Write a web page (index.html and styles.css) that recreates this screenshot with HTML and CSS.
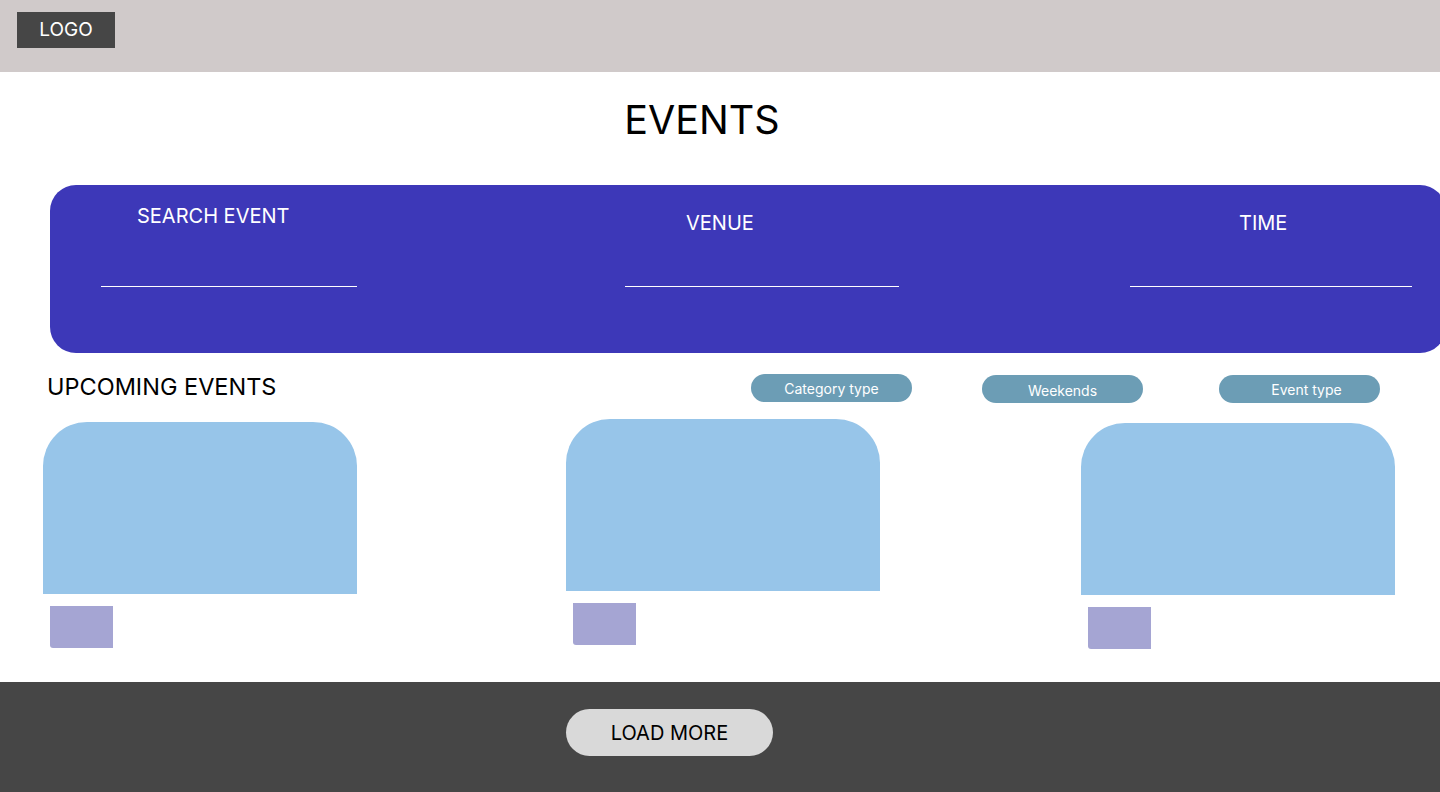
FILE: index.html
```html
<!DOCTYPE html>
<html lang="en">
<head>
    <meta charset="UTF-8">
    <meta name="viewport" content="width=device-width, initial-scale=1.0">
    <title>Events</title>
    <link rel="stylesheet" href="styles.css">
</head>
<body>
    <!-- top bar -->
    <header class="topbar">
        <div class="logo">LOGO</div>
    </header>

    <h1 class="page-title">EVENTS</h1>

    <!-- search panel -->
    <section class="search">
        <div class="field field--search">
            <span class="field__label">SEARCH EVENT</span>
            <span class="field__line"></span>
        </div>
        <div class="field field--venue">
            <span class="field__label">VENUE</span>
            <span class="field__line"></span>
        </div>
        <div class="field field--time">
            <span class="field__label">TIME</span>
            <span class="field__line"></span>
        </div>
    </section>

    <div class="upcoming">
        <h2 class="upcoming__title">UPCOMING EVENTS</h2>
        <div class="filters">
            <button class="pill pill--category">Category type</button>
            <button class="pill pill--weekends">Weekends</button>
            <button class="pill pill--type">Event type</button>
        </div>
    </div>

    <div class="cards">
        <div class="card card--one">
            <div class="card__img"></div>
            <div class="card__date"></div>
        </div>
        <div class="card card--two">
            <div class="card__img"></div>
            <div class="card__date"></div>
        </div>
        <div class="card card--three">
            <div class="card__img"></div>
            <div class="card__date"></div>
        </div>
    </div>

    <footer class="footer">
        <button class="load-more">LOAD MORE</button>
    </footer>
</body>
</html>
```

FILE: styles.css
```css
*{
    margin: 0;
    padding: 0;
    box-sizing: border-box;
}
html,body{
    height: 100%;
}
body{
    background-color: #fff;
    font-family: Inter, "Liberation Sans", sans-serif;
    display: flex;
    flex-direction: column;
    overflow: hidden;
}
.topbar{
    height: 72px;
    flex-shrink: 0;
    background-color: #d0caca;
    padding: 12px 17px;
}
.logo{
    width: 98px;
    height: 36px;
    background-color: #464646;
    color: #fff;
    font-size: 19px;
    line-height: 36px;
    text-align: center;
}
.page-title{
    margin-top: 24px;
    font-size: 39.5px;
    font-weight: 400;
    line-height: 48px;
    text-align: center;
    padding-right: 36px;
    color: #000;
}

/* search panel */
.search{
    margin-top: 41px;
    margin-left: 50px;
    margin-right: -6px;
    height: 168px;
    flex-shrink: 0;
    background-color: #3d38b8;
    border-radius: 26px;
    padding: 19px 0 0 51px;
    display: flex;
    align-items: flex-start;
}
.field{
    display: flex;
    flex-direction: column;
}
.field__label{
    color: #fff;
    font-size: 20px;
    line-height: 24px;
    white-space: nowrap;
}
.field__line{
    display: block;
    height: 1px;
    background-color: #fff;
}
.field--search{ width: 256px; }
.field--search .field__label{ padding-left: 36px; }
.field--search .field__line{ margin-top: 58px; }
.field--venue{ width: 274px; margin-left: 268px; margin-top: 7px; }
.field--venue .field__label{ padding-left: 61px; }
.field--venue .field__line{ margin-top: 51px; }
.field--time{ width: 282px; margin-left: 231px; margin-top: 7px; }
.field--time .field__label{ padding-left: 109px; }
.field--time .field__line{ margin-top: 51px; }

/* upcoming row */
.upcoming{
    margin-top: 20px;
    padding-left: 47px;
    display: flex;
    align-items: flex-start;
}
.upcoming__title{
    font-size: 23.5px;
    font-weight: 400;
    line-height: 28px;
    color: #000;
}
.filters{
    margin-left: auto;
    margin-right: 60px;
    display: flex;
    align-items: flex-start;
}
.pill{
    width: 161px;
    height: 28px;
    border: none;
    border-radius: 14px;
    background-color: #6c9db5;
    color: #fff;
    font-family: Inter, "Liberation Sans", sans-serif;
    font-size: 14px;
}
.pill--category{ margin-top: 1px; }
.pill--weekends{ margin-top: 2px; margin-left: 70px; padding-top: 3px; }
.pill--type{ margin-top: 2px; margin-left: 76px; padding-left: 14px; }

/* cards */
.cards{
    margin-top: 16px;
    padding-left: 43px;
    display: flex;
    align-items: flex-start;
}
.card{
    width: 314px;
}
.card--one{ margin-top: 3px; }
.card--two{ margin-left: 209px; }
.card--three{ margin-left: 201px; margin-top: 4px; }
.card__img{
    height: 172px;
    background-color: #97c5e9;
    border-radius: 44px 44px 0 0;
}
.card__date{
    width: 63px;
    height: 42px;
    margin: 12px 0 0 7px;
    background-color: #a5a5d3;
    border-radius: 0 0 0 3px;
}

/* footer */
.footer{
    margin-top: auto;
    height: 110px;
    flex-shrink: 0;
    background-color: #464646;
    padding: 27px 0 0 566px;
}
.load-more{
    width: 207px;
    height: 47px;
    border: none;
    border-radius: 24px;
    background-color: #d9d9d9;
    color: #000;
    font-family: Inter, "Liberation Sans", sans-serif;
    font-size: 20px;
}
```
